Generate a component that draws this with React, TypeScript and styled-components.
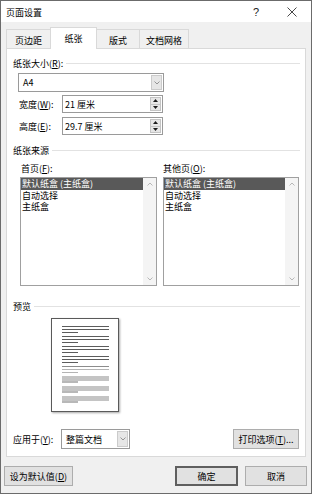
import React from "react";
import styled, { createGlobalStyle } from "styled-components";

const Global = createGlobalStyle`
  html, body { margin: 0; padding: 0; background: #ffffff; }
  body {
    font-family: "Noto Sans CJK SC", "Noto Sans", sans-serif;
    font-size: 9px;
    color: #000;
  }
  * { box-sizing: border-box; }
`;

const Dialog = styled.div`
  width: 312px;
  height: 494px;
  border: 1px solid #6b6b6b;
  background: #f0f0f0;
  display: flex;
  flex-direction: column;
`;

const TitleBar = styled.div`
  height: 21px;
  background: #ffffff;
  display: flex;
  align-items: center;
  padding: 0 3px 0 5px;
`;

const TitleText = styled.div`
  flex: 1;
  font-size: 9px;
  padding-top: 2px;
`;

const TitleButton = styled.div<{ $w: number }>`
  width: ${(p) => p.$w}px;
  height: 21px;
  display: flex;
  align-items: center;
  justify-content: center;
  font-family: "Liberation Sans", sans-serif;
  font-size: 11px;
  color: #222;
`;

const TitleSpacer = styled.div`
  width: 6px;
`;

const TabRow = styled.div`
  height: 21px;
  margin: 5px 0 0 5px;
  display: flex;
  align-items: flex-end;
  position: relative;
  z-index: 1;
`;

const Tab = styled.div<{ $w: number; $active?: boolean }>`
  width: ${(p) => p.$w}px;
  height: ${(p) => (p.$active ? 22 : 19)}px;
  margin-bottom: ${(p) => (p.$active ? -1 : 0)}px;
  background: ${(p) => (p.$active ? "#ffffff" : "#f0f0f0")};
  border: 1px solid #d9d9d9;
  border-bottom: none;
  display: flex;
  align-items: center;
  justify-content: center;
  padding-top: ${(p) => (p.$active ? 0 : 2)}px;
  position: relative;
  z-index: ${(p) => (p.$active ? 2 : 1)};
  & + & { margin-left: -1px; }
`;

const Panel = styled.div`
  margin-left: 5px;
  width: 300px;
  height: 409px;
  background: #ffffff;
  border: 1px solid #d9d9d9;
  padding: 7px 5px 7px 6px;
  display: flex;
  flex-direction: column;
`;

const SectionHeader = styled.div<{ $mt?: number }>`
  height: 14px;
  margin-top: ${(p) => p.$mt ?? 0}px;
  display: flex;
  align-items: center;
  gap: 3px;
  white-space: nowrap;
  &::after {
    content: "";
    flex: 1;
    height: 1px;
    background: #e2e2e2;
  }
`;

const U = styled.span`
  text-decoration: underline;
  text-underline-offset: 1px;
`;

const SelectBox = styled.div<{ $w: number; $ml?: number; $mt?: number; $h?: number }>`
  width: ${(p) => p.$w}px;
  height: ${(p) => p.$h ?? 19}px;
  margin-left: ${(p) => p.$ml ?? 0}px;
  margin-top: ${(p) => p.$mt ?? 0}px;
  border: 1px solid #9a9a9a;
  background: #ffffff;
  display: flex;
  align-items: stretch;
`;

const SelectValue = styled.div`
  flex: 1;
  display: flex;
  align-items: center;
  padding-left: 4px;
`;

const DropButton = styled.div`
  width: 11px;
  margin: 1px;
  background: #e6e6e6;
  border: 1px solid #cbcbcb;
  display: flex;
  align-items: center;
  justify-content: center;
`;

const FieldRow = styled.div<{ $mt: number }>`
  height: 18px;
  margin-top: ${(p) => p.$mt}px;
  display: flex;
  align-items: center;
`;

const FieldLabel = styled.div<{ $w: number; $pl?: number }>`
  width: ${(p) => p.$w}px;
  padding-left: ${(p) => p.$pl ?? 0}px;
  white-space: nowrap;
`;

const NumberBox = styled.div`
  width: 101px;
  height: 18px;
  border: 1px solid #9a9a9a;
  background: #fff;
  display: flex;
`;

const NumberValue = styled.div`
  flex: 1;
  display: flex;
  align-items: center;
  padding-left: 2px;
`;

const Spinner = styled.div`
  width: 11px;
  margin: 1px;
  display: flex;
  flex-direction: column;
  gap: 0;
`;

const SpinHalf = styled.div`
  flex: 1;
  background: #e6e6e6;
  border: 1px solid #c4c4c4;
  display: flex;
  align-items: center;
  justify-content: center;
  & + & { border-top: none; }
`;

const Columns = styled.div`
  margin-top: 4px;
  margin-left: 7px;
  display: flex;
  gap: 6px;
`;

const Column = styled.div<{ $w: number }>`
  width: ${(p) => p.$w}px;
  display: flex;
  flex-direction: column;
`;

const ColLabel = styled.div<{ $pl?: number }>`
  height: 14px;
  display: flex;
  align-items: center;
  padding-left: ${(p) => p.$pl ?? 0}px;
`;

const ListBox = styled.div`
  margin-top: 2px;
  height: 109px;
  border: 1px solid #a0a0a0;
  background: #fff;
  display: flex;
`;

const ListItems = styled.div`
  flex: 1;
  display: flex;
  flex-direction: column;
`;

const ListItem = styled.div<{ $sel?: boolean }>`
  height: 11.5px;
  line-height: 11.5px;
  padding-left: 1px;
  white-space: nowrap;
  background: ${(p) => (p.$sel ? "#595959" : "transparent")};
  color: ${(p) => (p.$sel ? "#ffffff" : "#000")};
`;

const ScrollBar = styled.div`
  width: 13px;
  background: #f4f4f4;
  display: flex;
  flex-direction: column;
  justify-content: space-between;
  align-items: center;
  padding: 4px 0 4px;
`;

const PreviewPage = styled.div`
  margin-top: 5px;
  margin-left: 38px;
  width: 68px;
  height: 94px;
  background: #fff;
  border: 1px solid #5a5a5a;
  box-shadow: 1px 1px 2px rgba(0, 0, 0, 0.35);
  padding: 7px 9px 0 10px;
  display: flex;
  flex-direction: column;
  gap: 3px;
`;

const LineGroup = styled.div`
  display: flex;
  flex-direction: column;
  gap: 2px;
`;

const TextLine = styled.div<{ $short?: boolean; $c: string; $h?: number }>`
  width: ${(p) => (p.$short ? 16 : 47)}px;
  height: ${(p) => p.$h ?? 1}px;
  background: ${(p) => p.$c};
`;

const ShadeGroup = styled.div`
  display: flex;
  flex-direction: column;
  height: 7px;
`;

const ApplyRow = styled.div`
  margin-top: 17px;
  height: 20px;
  display: flex;
  align-items: center;
`;

const Spacer = styled.div`
  flex: 1;
`;

const Button = styled.div<{ $w: number; $default?: boolean; $mr?: number }>`
  width: ${(p) => p.$w}px;
  height: 20px;
  margin-right: ${(p) => p.$mr ?? 0}px;
  background: #e1e1e1;
  border: ${(p) => (p.$default ? "2px solid #5f5f5f" : "1px solid #adadad")};
  display: flex;
  align-items: center;
  justify-content: center;
  white-space: nowrap;
`;

const Footer = styled.div`
  margin-top: 9px;
  height: 20px;
  padding: 0 4px 0 3px;
  display: flex;
  align-items: center;
  gap: 7px;
`;

const Chevron = ({ up = false, color = "#8a8a8a" }: { up?: boolean; color?: string }) => (
  <svg width="6" height="4" viewBox="0 0 6 4">
    <polyline
      points={up ? "0.5,3.5 3,1 5.5,3.5" : "0.5,0.5 3,3 5.5,0.5"}
      fill="none"
      stroke={color}
      strokeWidth="0.9"
    />
  </svg>
);

const Tri = ({ up }: { up?: boolean }) => (
  <svg width="5" height="3" viewBox="0 0 5 3">
    <polygon points={up ? "0,3 2.5,0 5,3" : "0,0 2.5,3 5,0"} fill="#1a1a1a" />
  </svg>
);

const CloseIcon = () => (
  <svg width="10" height="10" viewBox="0 0 10 10">
    <line x1="0.5" y1="0.5" x2="9.5" y2="9.5" stroke="#333" strokeWidth="0.9" />
    <line x1="9.5" y1="0.5" x2="0.5" y2="9.5" stroke="#333" strokeWidth="0.9" />
  </svg>
);

const items = ["默认纸盒 (主纸盒)", "自动选择", "主纸盒"];

const SourceList = () => (
  <ListBox>
    <ListItems>
      {items.map((t, i) => (
        <ListItem key={t} $sel={i === 0}>
          {t}
        </ListItem>
      ))}
    </ListItems>
    <ScrollBar>
      <Chevron up color="#b0b0b0" />
      <Chevron color="#b0b0b0" />
    </ScrollBar>
  </ListBox>
);

export default function App() {
  const darkGroups = [0, 1, 2, 3];
  return (
    <>
      <Global />
      <Dialog>
        <TitleBar>
          <TitleText>页面设置</TitleText>
          <TitleButton $w={28}>?</TitleButton>
          <TitleSpacer />
          <TitleButton $w={32}>
            <CloseIcon />
          </TitleButton>
        </TitleBar>

        <TabRow>
          <Tab $w={45}>页边距</Tab>
          <Tab $w={47} $active>
            纸张
          </Tab>
          <Tab $w={44}>版式</Tab>
          <Tab $w={50}>文档网格</Tab>
        </TabRow>

        <Panel>
          <SectionHeader>
            <span>
              纸张大小(<U>R</U>):
            </span>
          </SectionHeader>
          <SelectBox $w={146} $ml={5} $mt={3}>
            <SelectValue>A4</SelectValue>
            <DropButton>
              <Chevron />
            </DropButton>
          </SelectBox>

          <FieldRow $mt={3}>
            <FieldLabel $w={49} $pl={6}>
              宽度(<U>W</U>):
            </FieldLabel>
            <NumberBox>
              <NumberValue>21 厘米</NumberValue>
              <Spinner>
                <SpinHalf>
                  <Tri up />
                </SpinHalf>
                <SpinHalf>
                  <Tri />
                </SpinHalf>
              </Spinner>
            </NumberBox>
          </FieldRow>
          <FieldRow $mt={4}>
            <FieldLabel $w={49} $pl={6}>
              高度(<U>E</U>):
            </FieldLabel>
            <NumberBox>
              <NumberValue>29.7 厘米</NumberValue>
              <Spinner>
                <SpinHalf>
                  <Tri up />
                </SpinHalf>
                <SpinHalf>
                  <Tri />
                </SpinHalf>
              </Spinner>
            </NumberBox>
          </FieldRow>

          <SectionHeader $mt={8}>
            <span>纸张来源</span>
          </SectionHeader>
          <Columns>
            <Column $w={137}>
              <ColLabel $pl={1}>
                首页(<U>F</U>):
              </ColLabel>
              <SourceList />
            </Column>
            <Column $w={136}>
              <ColLabel>
                其他页(<U>O</U>):
              </ColLabel>
              <SourceList />
            </Column>
          </Columns>

          <SectionHeader $mt={13}>
            <span>预览</span>
          </SectionHeader>
          <PreviewPage>
            {darkGroups.map((g) => (
              <LineGroup key={g}>
                <TextLine $c="#5c5c5c" />
                <TextLine $c="#5c5c5c" />
                <TextLine $c="#5c5c5c" $short />
              </LineGroup>
            ))}
            <LineGroup>
              <TextLine $c="#8c8c8c" />
              <TextLine $c="#b4b4b4" />
              <TextLine $c="#b4b4b4" $short />
            </LineGroup>
            {[0, 1, 2].map((g) => (
              <ShadeGroup key={g}>
                <TextLine $c="#c4c4c4" $h={5} />
                <TextLine $c="#b8b8b8" $h={2} $short />
              </ShadeGroup>
            ))}
          </PreviewPage>

          <ApplyRow>
            <FieldLabel $w={48}>
              应用于(<U>Y</U>):
            </FieldLabel>
            <SelectBox $w={69} $h={20}>
              <SelectValue>整篇文档</SelectValue>
              <DropButton>
                <Chevron />
              </DropButton>
            </SelectBox>
            <Spacer />
            <Button $w={66} $mr={1}>
              打印选项(<U>T</U>)...
            </Button>
          </ApplyRow>
        </Panel>

        <Footer>
          <Button $w={69}>
            设为默认值(<U>D</U>)
          </Button>
          <Spacer />
          <Button $w={63} $default>
            确定
          </Button>
          <Button $w={62}>取消</Button>
        </Footer>
      </Dialog>
    </>
  );
}
